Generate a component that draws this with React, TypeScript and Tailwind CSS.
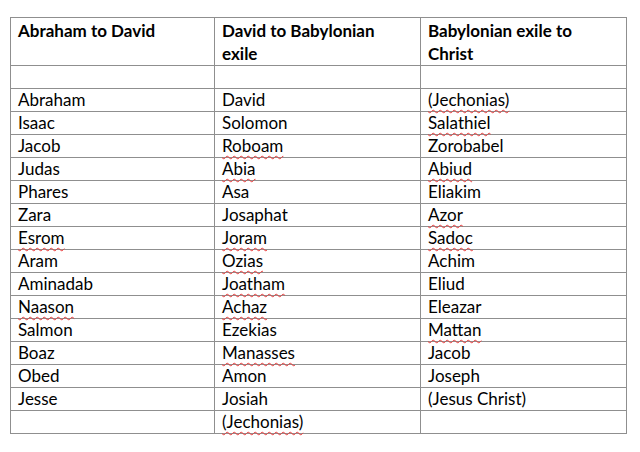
const rows: [string, string, string][] = [
  ["Abraham", "David", "(Jechonias)"],
  ["Isaac", "Solomon", "Salathiel"],
  ["Jacob", "Roboam", "Zorobabel"],
  ["Judas", "Abia", "Abiud"],
  ["Phares", "Asa", "Eliakim"],
  ["Zara", "Josaphat", "Azor"],
  ["Esrom", "Joram", "Sadoc"],
  ["Aram", "Ozias", "Achim"],
  ["Aminadab", "Joatham", "Eliud"],
  ["Naason", "Achaz", "Eleazar"],
  ["Salmon", "Ezekias", "Mattan"],
  ["Boaz", "Manasses", "Jacob"],
  ["Obed", "Amon", "Joseph"],
  ["Jesse", "Josiah", "(Jesus Christ)"],
  ["", "(Jechonias)", ""],
];

// words Word flags with the red squiggle
const flagged = new Set([
  "(Jechonias)", "Salathiel", "Roboam", "Abia", "Abiud", "Azor", "Esrom",
  "Joram", "Sadoc", "Ozias", "Joatham", "Naason", "Achaz", "Mattan", "Manasses",
]);

function Cell({ text }: { text: string }) {
  return (
    <td className="border border-[#8f8f8f] h-[23px] px-[7px] py-0 align-top leading-[22px]">
      {flagged.has(text) ? (
        <span className="underline decoration-wavy decoration-[#e83a3a] decoration-1 underline-offset-[3px]">
          {text}
        </span>
      ) : (
        text
      )}
    </td>
  );
}

export default function App() {
  return (
    <div className="w-[640px] h-[452px] bg-white pt-[17px] pl-[10px] font-['Lato',sans-serif] text-[17px] text-black">
      <table className="border-collapse table-fixed w-[616px]">
        <colgroup>
          <col className="w-[204px]" />
          <col className="w-[206px]" />
          <col className="w-[206px]" />
        </colgroup>
        <thead>
          <tr>
            <th className="border border-[#8f8f8f] h-[46px] px-[7px] pt-px align-top text-left font-bold leading-[23px]">
              Abraham to David
            </th>
            <th className="border border-[#8f8f8f] h-[46px] px-[7px] pt-px align-top text-left font-bold leading-[23px]">
              David to Babylonian exile
            </th>
            <th className="border border-[#8f8f8f] h-[46px] px-[7px] pt-px align-top text-left font-bold leading-[23px]">
              Babylonian exile to Christ
            </th>
          </tr>
        </thead>
        <tbody>
          <tr>
            <Cell text="" />
            <Cell text="" />
            <Cell text="" />
          </tr>
          {rows.map((r, i) => (
            <tr key={i}>
              <Cell text={r[0]} />
              <Cell text={r[1]} />
              <Cell text={r[2]} />
            </tr>
          ))}
        </tbody>
      </table>
    </div>
  );
}
